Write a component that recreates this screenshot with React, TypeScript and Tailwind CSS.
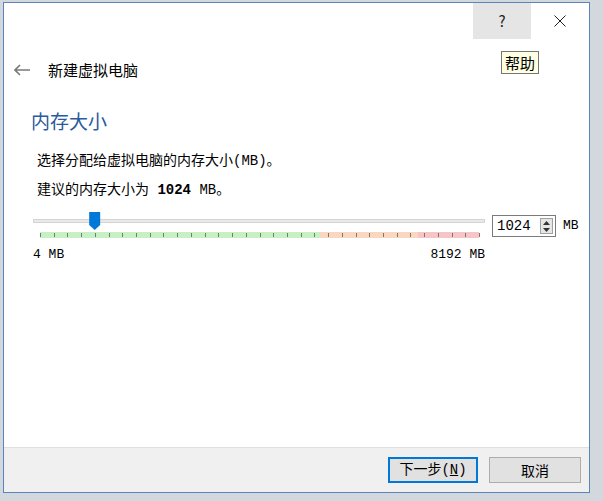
const cjk = { fontFamily: '"Noto Sans CJK SC", "Noto Sans", sans-serif' };
const mono = { fontFamily: '"Liberation Mono", "Noto Sans CJK SC", monospace' };

const TICKS = Array.from({ length: 33 }, (_, i) => 7 + (i * 439) / 32);

const MemorySlider = ({ value }: { value: number }) => {
  const frac = (value - 4) / (8192 - 4);
  const hx = 7 + frac * 439;
  return (
    <svg width="452" height="28" viewBox="0 0 452 28">
      <rect x="0.5" y="8.5" width="451" height="3" fill="#e9e9e9" stroke="#d4d4d4" />
      <rect x="7" y="21" width="280" height="6" fill="#c7f0c5" />
      <rect x="287" y="21" width="98" height="6" fill="#fbd6c0" />
      <rect x="385" y="21" width="61" height="6" fill="#f7c5c5" />
      {TICKS.map((x, i) => (
        <line key={i} x1={Math.round(x) + 0.5} x2={Math.round(x) + 0.5} y1="22" y2="26" stroke="#6f7f6f" strokeWidth="1" />
      ))}
      <path d={`M${hx - 5.5},1 h11 v13 l-5.5,5 l-5.5,-5 z`} fill="#0078d7" />
    </svg>
  );
};

export default function App() {
  return (
    <div className="w-[603px] h-[501px] bg-[#d3d8df] pt-[2px] pl-[3px]">
      <div className="relative w-[587px] h-[491px] border border-[#5b84bd] bg-white flex flex-col">
        {/* title bar */}
        <div className="h-[36px] flex justify-end shrink-0">
          <div className="w-[58px] h-full bg-[#e5e5e5] flex items-center justify-center text-[15px] text-[#222]" style={cjk}>?</div>
          <div className="w-[58px] h-full flex items-center justify-center">
            <svg width="12" height="12" viewBox="0 0 12 12">
              <path d="M0.5,0.5 L11.5,11.5 M11.5,0.5 L0.5,11.5" stroke="#222" strokeWidth="1" />
            </svg>
          </div>
        </div>

        <div className="absolute left-[497px] top-[48px] px-[3px] h-[23px] border border-[#767676] bg-[#ffffe1] flex items-center text-[15px] text-black leading-none" style={cjk}>帮助</div>

        {/* header */}
        <div className="mt-[21px] h-[20px] flex items-center pl-[10px] gap-[18px]">
          <svg width="16" height="12" viewBox="0 0 16 12">
            <path d="M1,6 H16 M6,1 L1,6 L6,11" stroke="#7a7a7a" strokeWidth="1.6" fill="none" />
          </svg>
          <span className="text-[15px] text-black" style={cjk}>新建虚拟电脑</span>
        </div>

        <div className="mt-[28px] pl-[27px] h-[26px] flex items-center text-[19px] text-[#2a5a9e]" style={cjk}>内存大小</div>

        <div className="pl-[33px] text-[14px] text-black" style={mono}>
          <div className="mt-[17px] h-[20px] leading-[20px]">选择分配给虚拟电脑的内存大小(MB)。</div>
          <div className="mt-[9px] h-[20px] leading-[20px]">
            建议的内存大小为 <b className="font-bold">1024</b> MB。
          </div>
        </div>

        <div className="mt-[11px] pl-[29px] flex items-start">
          <div className="w-[452px] flex flex-col">
            <MemorySlider value={1024} />
            <div className="mt-[8px] flex justify-between text-[13px] leading-[16px] text-black" style={mono}>
              <span>4 MB</span>
              <span>8192 MB</span>
            </div>
          </div>
          <div className="ml-[7px] mt-[4px] w-[64px] h-[22px] border border-[#7a7a7a] flex items-center justify-between pl-[4px] pr-[2px]">
            <span className="text-[14px] text-black" style={mono}>1024</span>
            <div className="w-[13px] h-[16px] bg-[#e6e6e6] border border-[#a0a0a0] flex flex-col items-center justify-around">
              <svg width="7" height="4" viewBox="0 0 7 4"><path d="M0,4 L3.5,0 L7,4 z" fill="#333" /></svg>
              <svg width="7" height="4" viewBox="0 0 7 4"><path d="M0,0 L3.5,4 L7,0 z" fill="#333" /></svg>
            </div>
          </div>
          <span className="ml-[7px] mt-[7px] text-[13px] leading-[16px] text-black" style={mono}>MB</span>
        </div>

        {/* footer */}
        <div className="mt-auto h-[45px] border-t border-[#dfdfdf] bg-[#f0f0f0] flex items-center justify-end gap-[11px] pr-[8px]">
          <button className="w-[90px] h-[26px] border-2 border-[#0078d7] bg-[#e1e1e1] text-[14px] text-black flex items-center justify-center" style={mono}>
            下一步(<span className="underline">N</span>)
          </button>
          <button className="w-[92px] h-[26px] border border-[#adadad] bg-[#e1e1e1] text-[14px] text-black flex items-center justify-center" style={cjk}>
            取消
          </button>
        </div>
      </div>
    </div>
  );
}
